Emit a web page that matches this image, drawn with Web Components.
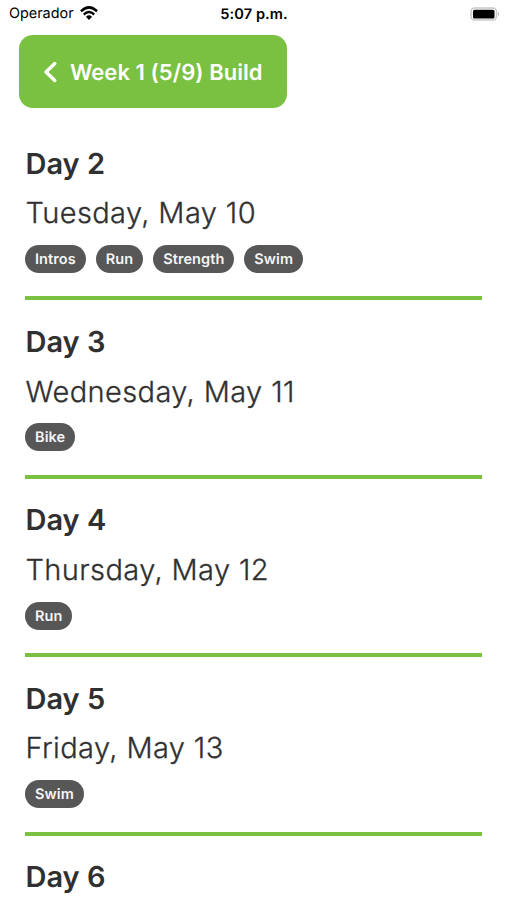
<!DOCTYPE html>
<html lang="en"><head><meta charset="utf-8"><title>Training plan</title>
<style>body{margin:0;background:#fff;font-family:Inter,sans-serif;color:#303030;text-rendering:geometricPrecision}</style></head><body>
<training-screen></training-screen>
<script>
const define=(name,html)=>customElements.define(name,class extends HTMLElement{constructor(){super();this.attachShadow({mode:'open'}).innerHTML=html;}});
define('status-bar',`<style>:host{display:grid;grid-template-columns:1fr auto 1fr;align-items:center;height:28px;flex:none;padding:0 7px 0 9px;color:#000;box-sizing:border-box;font-size:14px;line-height:20px}
.l{display:flex;align-items:center;gap:5px}.l span{width:66px;font-size:14.4px}.t{font-size:14.6px;font-weight:600;letter-spacing:.08px;margin-right:1px}.r{display:flex;justify-content:flex-end;padding-bottom:1px}svg{display:block}.l svg{margin-bottom:2px}</style>
<div class="l"><span>Operador</span><svg width="18" height="14" viewBox="0 0 20 14" preserveAspectRatio="none"><path d="M1 5.3Q10-2.5 19 5.3M4.2 8.5Q10 3.5 15.8 8.5" fill="none" stroke="#000" stroke-width="2.6"/><path d="M6.6 10.7Q10 7.8 13.4 10.7L10 14Z"/></svg></div><span class="t">5:07 p.m.</span>
<div class="r"><svg width="30" height="14" viewBox="0 0 30 14"><rect x="1" y="1" width="25.5" height="12" rx="3.8" fill="#fff" stroke="#c8c8c8" stroke-width="1.5"/><rect x="3" y="2.7" width="21.5" height="8.8" rx="1.6"/><path d="M28 4.8Q30.4 7 28 9.2Z" fill="#bbb"/></svg></div>`);
define('back-button',`<style>:host{display:flex;align-items:center;box-sizing:border-box;width:268px;height:73px;border-radius:14px;background:#7ac142;color:#fff;padding-left:24px;gap:11.5px;font-size:22px;font-weight:600;letter-spacing:.06px;white-space:nowrap}span{padding-top:2px}</style><svg width="15" height="22" viewBox="0 0 15 22"><path d="M11.8 2.6L3 11L11.8 19.4" fill="none" stroke="#fff" stroke-width="3.5" stroke-linecap="round" stroke-linejoin="round"/></svg><span><slot></slot></span>`);
define('activity-tag',`<style>:host{display:block;box-sizing:border-box;height:28px;line-height:29px;padding:0 10px;border-radius:14px;background:#575757;color:#f5f5f5;font-size:14.5px;letter-spacing:.08px;font-weight:600}</style><slot></slot>`);
define('day-entry',`<style>:host{display:block;box-sizing:border-box;height:178.4px;border-bottom:4px solid #7ac142;padding-top:23.6px}
h2{margin:0;padding-left:.5px;font-size:29px;line-height:36px;font-weight:600}p{margin:12.7px 0 0;padding-left:.5px;font-size:29px;line-height:38px;font-weight:300;letter-spacing:.4px;-webkit-text-stroke:.3px #303030}.tags{display:flex;gap:10px;margin-top:12.7px}</style><h2><slot name="day"></slot></h2><p><slot name="date"></slot></p><div class="tags"><slot></slot></div>`);
define('training-screen',`<style>:host{display:flex;flex-direction:column;height:900px;overflow:hidden}back-button{margin:7.4px 0 0 19.4px;flex:none}main{margin:13.6px 25px 0;flex:none}</style>
<status-bar></status-bar><back-button>Week 1 (5/9) Build</back-button><main>
<day-entry><span slot="day">Day 2</span><span slot="date">Tuesday, May 10</span><activity-tag>Intros</activity-tag><activity-tag>Run</activity-tag><activity-tag>Strength</activity-tag><activity-tag>Swim</activity-tag></day-entry>
<day-entry><span slot="day">Day 3</span><span slot="date">Wednesday, May 11</span><activity-tag>Bike</activity-tag></day-entry>
<day-entry><span slot="day">Day 4</span><span slot="date">Thursday, May 12</span><activity-tag>Run</activity-tag></day-entry>
<day-entry><span slot="day">Day 5</span><span slot="date">Friday, May 13</span><activity-tag>Swim</activity-tag></day-entry>
<day-entry><span slot="day">Day 6</span></day-entry></main>`);
</script></body></html>
